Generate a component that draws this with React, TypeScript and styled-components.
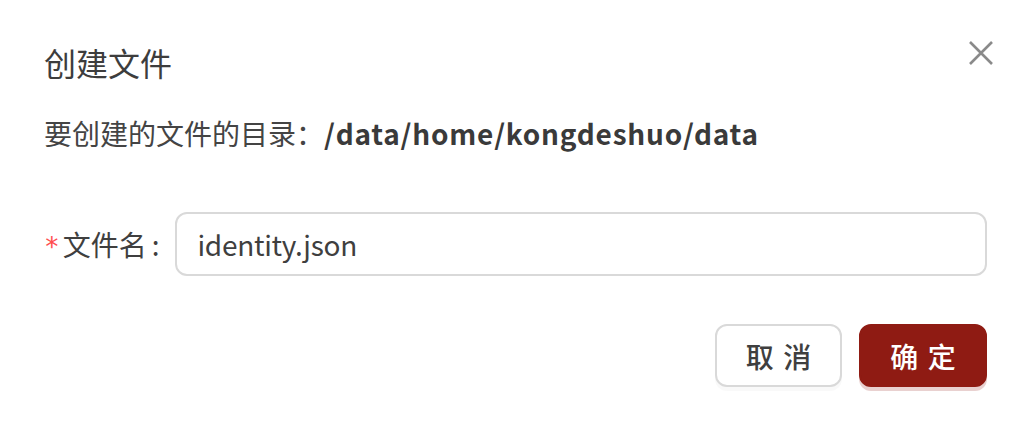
import React, { FC, useState, ChangeEvent } from 'react';
import styled, { createGlobalStyle } from 'styled-components';

const GlobalStyle = createGlobalStyle`
    html, body {
        margin: 0;
        padding: 0;
        background: #fff;
    }
    body {
        font-family: "Noto Sans CJK SC", "Noto Sans", sans-serif;
        color: #3f3f3f;
    }
`;

const Modal = styled.div`
    position: relative;
    width: 1030px;
    height: 422px;
    box-sizing: border-box;
    padding: 40px 43px 0 44px;
    background: #fff;
`;

const Title = styled.div`
    font-size: 32px;
    line-height: 44px;
    font-weight: 400;
    color: #3d3d3d;
`;

const CloseButton = styled.button`
    position: absolute;
    top: 37px;
    right: 33px;
    width: 32px;
    height: 32px;
    padding: 0;
    border: none;
    background: transparent;
    display: flex;
    align-items: center;
    justify-content: center;
    cursor: pointer;
    color: #8a8a8a;
`;

const Info = styled.p`
    margin: 27px 0 0;
    font-size: 28px;
    line-height: 44px;
    color: #444;
    b {
        font-weight: 700;
        letter-spacing: 0.8px;
        color: #3a3a3a;
    }
`;

const FormRow = styled.div`
    display: flex;
    align-items: center;
    margin-top: 57px;
`;

const Label = styled.label`
    display: flex;
    align-items: center;
    flex: none;
    font-size: 28px;
    line-height: 44px;
    color: #3f3f3f;
    margin-right: 16px;
    &::before {
        content: '*';
        color: #ff4d4f;
        font-size: 26px;
        font-family: SimSong, monospace;
        margin-right: 3px;
        margin-top: 6px;
    }
    &::after {
        content: ':';
        margin-left: 5px;
    }
`;

const Input = styled.input`
    flex: 1;
    min-width: 0;
    height: 64px;
    box-sizing: border-box;
    padding: 0 20px;
    border: 2px solid #d9d9d9;
    border-radius: 12px;
    font-family: inherit;
    font-size: 28px;
    letter-spacing: -0.3px;
    color: #3f3f3f;
    outline: none;
    background: #fff;
`;

const Footer = styled.div`
    display: flex;
    justify-content: flex-end;
    gap: 17px;
    margin-top: 48px;
`;

const Button = styled.button<{ $primary?: boolean }>`
    height: 63px;
    width: ${p => (p.$primary ? '128px' : '127px')};
    box-sizing: border-box;
    padding: 0;
    border-radius: 12px;
    font-family: inherit;
    font-size: 28px;
    font-weight: 500;
    letter-spacing: 0.34em;
    text-indent: 0.34em;
    cursor: pointer;
    border: 2px solid ${p => (p.$primary ? '#8f1b13' : '#d9d9d9')};
    background: ${p => (p.$primary ? '#8f1b13' : '#fff')};
    color: ${p => (p.$primary ? '#fff' : '#3f3f3f')};
    box-shadow: ${p =>
        p.$primary ? '0 4px 0 rgba(143, 27, 19, 0.2)' : '0 4px 0 rgba(0, 0, 0, 0.025)'};
`;

const CloseIcon: FC = () => (
    <svg width="26" height="26" viewBox="0 0 26 26" fill="none">
        <path d="M2 2L24 24M24 2L2 24" stroke="currentColor" strokeWidth="2.6" />
    </svg>
);

const App: FC = () => {
    const [name, setName] = useState('identity.json');

    const handleChange = (e: ChangeEvent<HTMLInputElement>) => {
        setName(e.currentTarget.value);
    };

    return (
        <>
            <GlobalStyle />
            <Modal>
                <Title>创建文件</Title>
                <CloseButton aria-label="close">
                    <CloseIcon />
                </CloseButton>
                <Info>
                    要创建的文件的目录：<b>/data/home/kongdeshuo/data</b>
                </Info>
                <FormRow>
                    <Label htmlFor="filename">文件名</Label>
                    <Input id="filename" value={name} onChange={handleChange} />
                </FormRow>
                <Footer>
                    <Button>取消</Button>
                    <Button $primary>确定</Button>
                </Footer>
            </Modal>
        </>
    );
};

export default App;
